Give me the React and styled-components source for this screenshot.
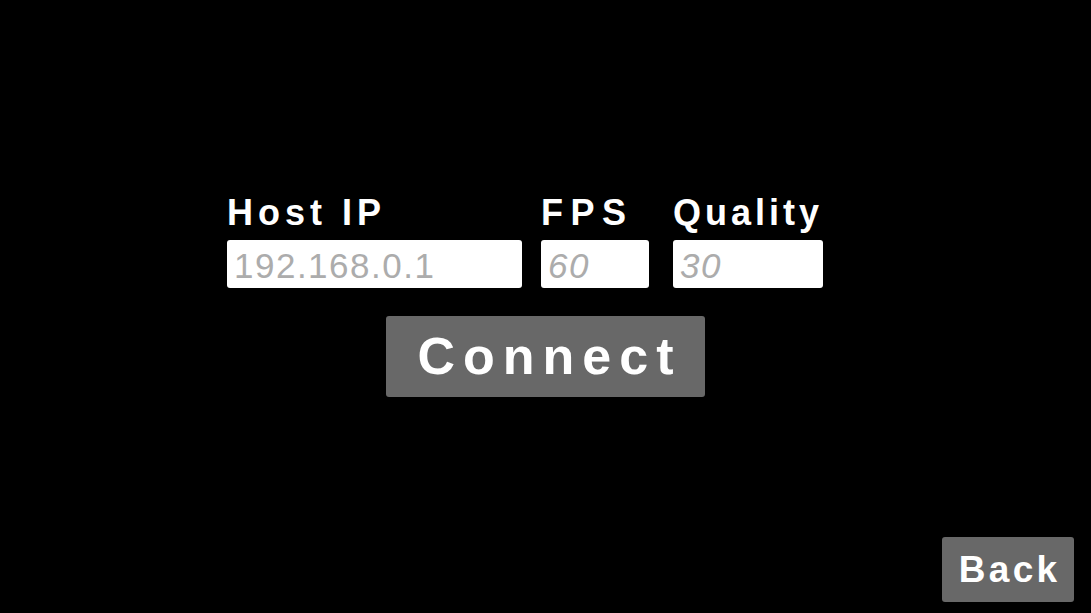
import React from "react";
import styled, { createGlobalStyle } from "styled-components";

const Global = createGlobalStyle`
  html, body { margin: 0; padding: 0; background: #000; }
  body { font-family: "Liberation Sans", Arial, sans-serif; }
  * { box-sizing: border-box; }
`;

const Screen = styled.div`
  width: 1091px;
  height: 613px;
  background: #000;
  display: flex;
  flex-direction: column;
`;

const Content = styled.main`
  flex: 1;
  display: flex;
  flex-direction: column;
  padding-top: 195px;
`;

const FieldRow = styled.div`
  display: flex;
  align-items: flex-start;
  padding-left: 227px;
`;

const Field = styled.label`
  display: flex;
  flex-direction: column;
  width: ${(p) => p.$w}px;
  margin-right: ${(p) => p.$gap || 0}px;
`;

const Label = styled.span`
  color: #fff;
  font-weight: 700;
  font-size: 36px;
  line-height: 36px;
  height: 36px;
  letter-spacing: ${(p) => p.$ls ?? 5}px;
  white-space: nowrap;
  margin-bottom: 9px;
`;

const Input = styled.input`
  width: 100%;
  height: 48px;
  border: none;
  outline: none;
  border-radius: 3px;
  background: #fff;
  padding: 4px 6px 0 7px;
  font-family: "Liberation Sans", Arial, sans-serif;
  font-size: 35px;
  letter-spacing: 1.5px;
  color: #333;
  font-style: ${(p) => (p.$italic ? "italic" : "normal")};
  &::placeholder {
    color: #acacac;
    opacity: 1;
  }
`;

const ButtonRow = styled.div`
  display: flex;
  justify-content: center;
  margin-top: 28px;
`;

const Button = styled.button`
  width: ${(p) => p.$w}px;
  height: ${(p) => p.$h}px;
  background: #686868;
  border: none;
  border-radius: 3px;
  color: #fff;
  font-family: "Liberation Sans", Arial, sans-serif;
  font-weight: 700;
  font-size: ${(p) => p.$fs}px;
  line-height: ${(p) => p.$h}px;
  letter-spacing: ${(p) => p.$ls}px;
  padding: 0 0 0 ${(p) => p.$ls}px;
  text-align: center;
  cursor: pointer;
`;

const Footer = styled.footer`
  display: flex;
  justify-content: flex-end;
  padding: 0 17px 11px 0;
`;

export default function App() {
  return (
    <>
      <Global />
      <Screen>
        <Content>
          <FieldRow>
            <Field $w={295} $gap={19}>
              <Label>Host IP</Label>
              <Input placeholder="192.168.0.1" />
            </Field>
            <Field $w={108} $gap={24}>
              <Label $ls={7.5}>FPS</Label>
              <Input $italic placeholder="60" />
            </Field>
            <Field $w={150}>
              <Label $ls={4}>Quality</Label>
              <Input $italic placeholder="30" />
            </Field>
          </FieldRow>
          <ButtonRow>
            <Button $w={319} $h={81} $fs={52} $ls={8}>
              Connect
            </Button>
          </ButtonRow>
        </Content>
        <Footer>
          <Button $w={132} $h={65} $fs={37} $ls={3.3}>
            Back
          </Button>
        </Footer>
      </Screen>
    </>
  );
}
